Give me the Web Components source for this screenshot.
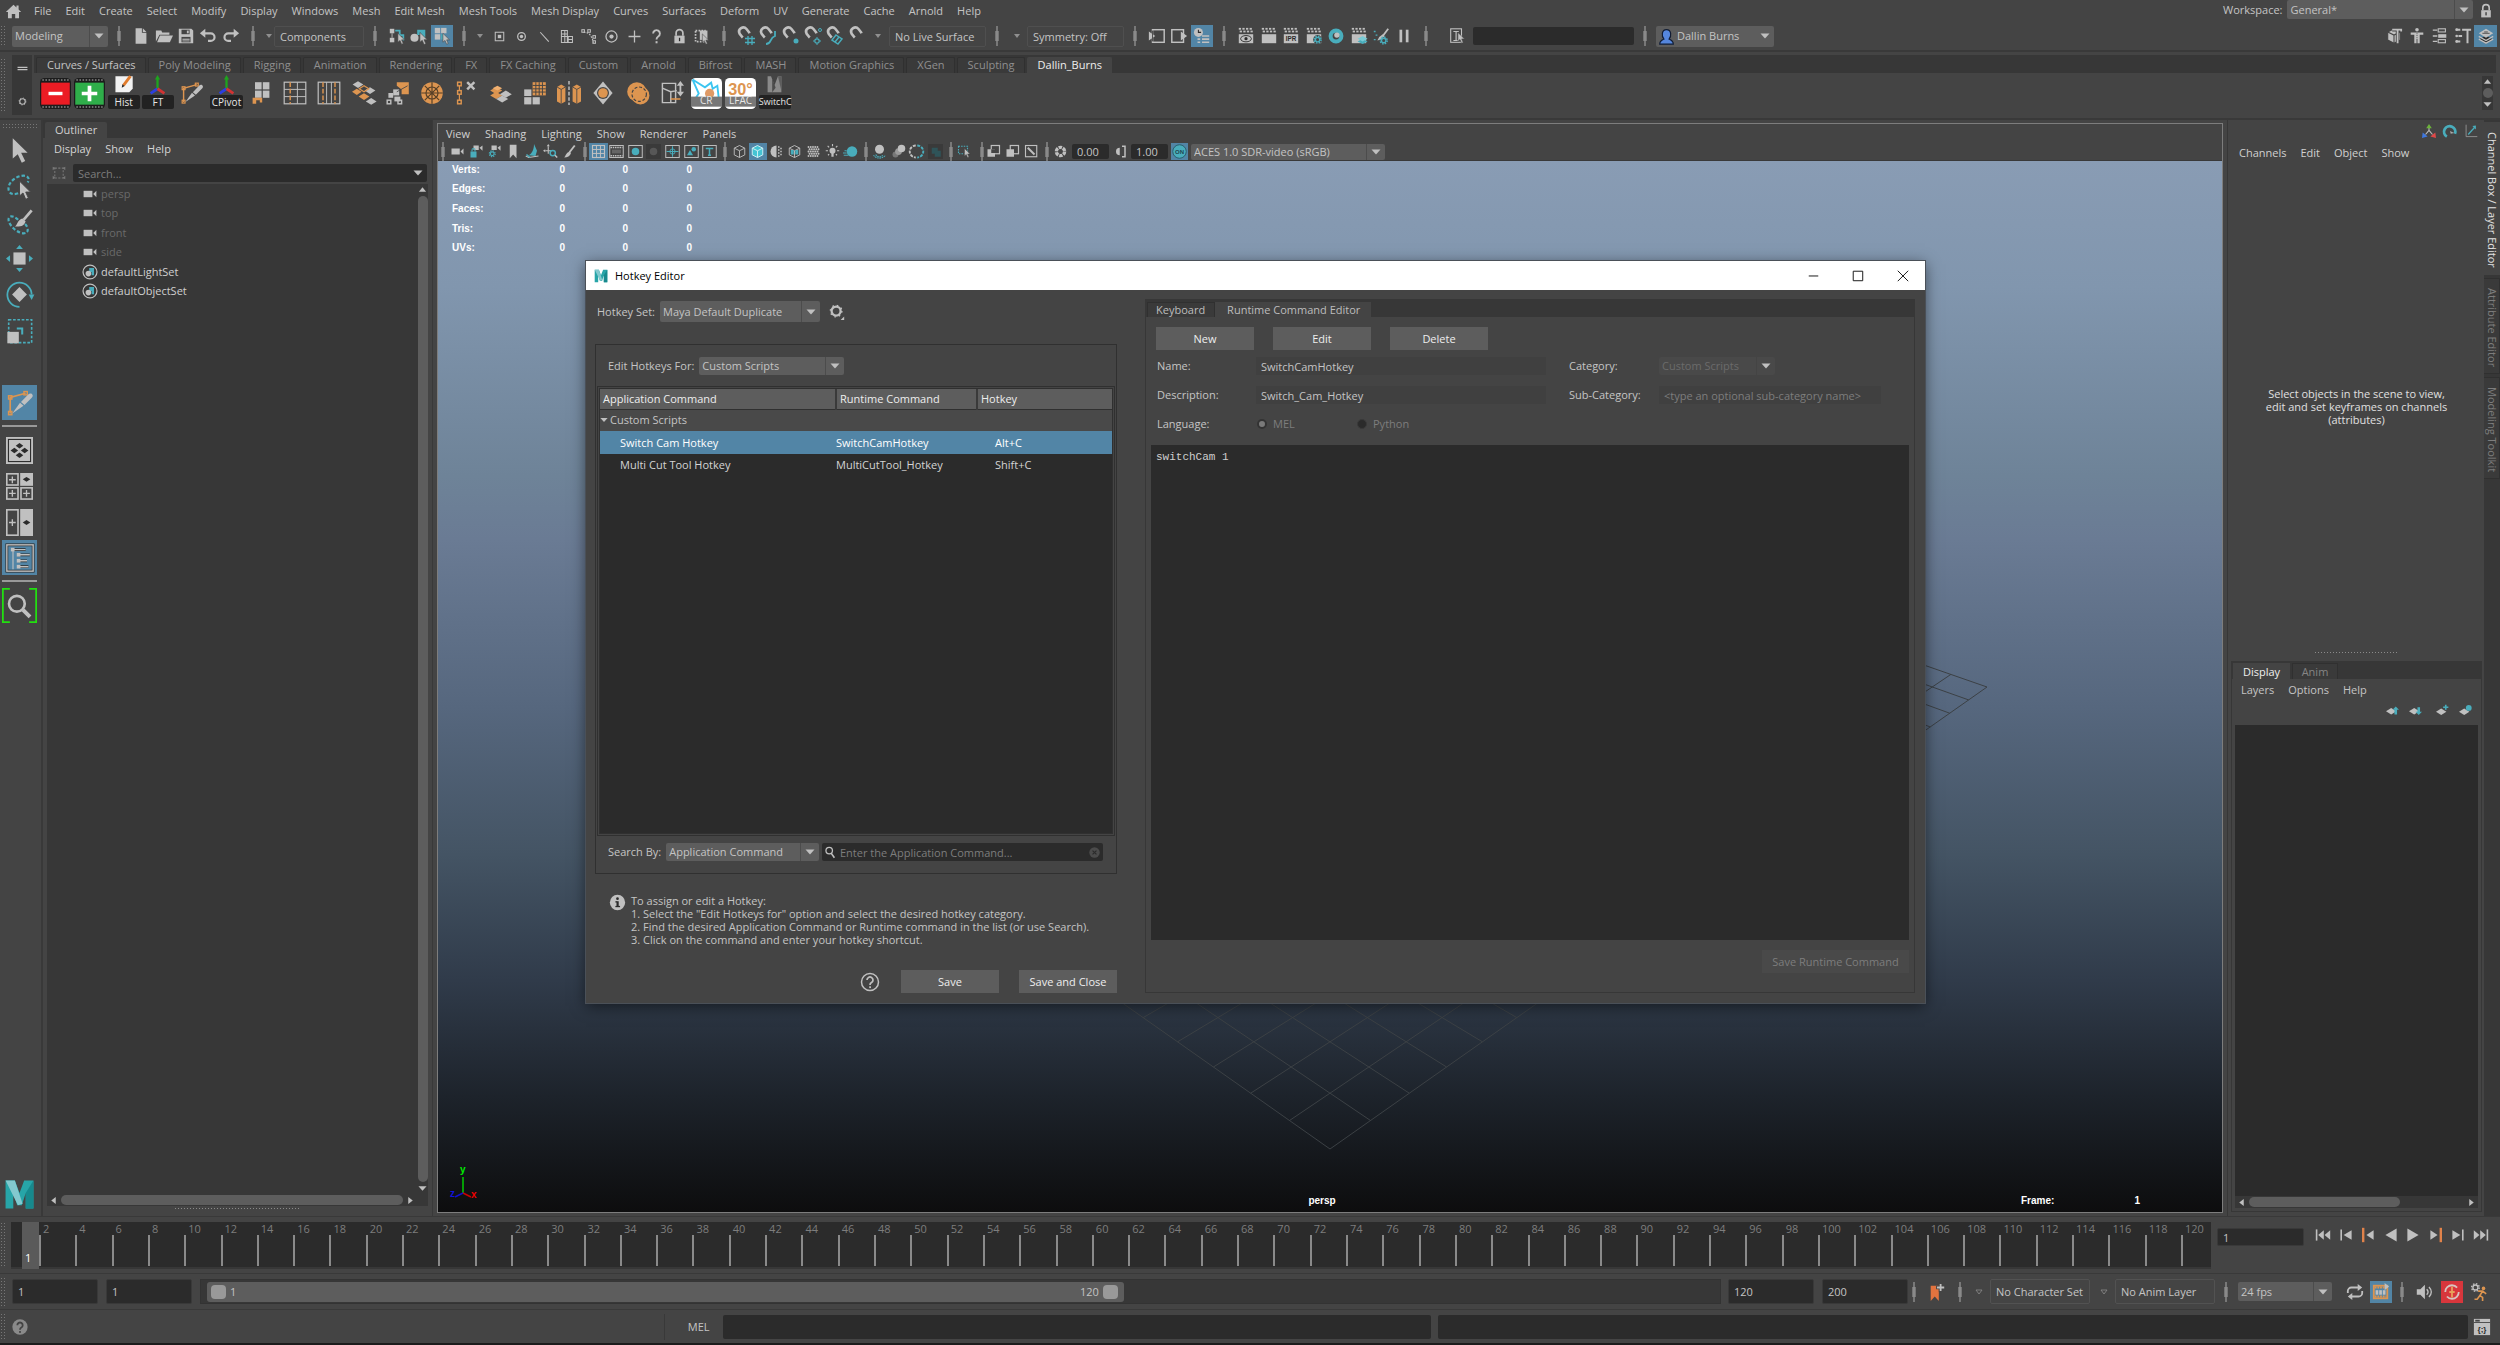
<!DOCTYPE html>
<html lang="en">
<head>
<meta charset="utf-8">
<title>Maya - Hotkey Editor</title>
<style>
  html, body { margin: 0; height: 100%; background: #444; overflow: hidden; }
  body { font: 11px/14px "Open Sans", "Noto Sans", sans-serif; color: #c4c4c4; }
</style>
</head>
<body>
<maya-app></maya-app>
<script>
const G = '#c0c0c0', T = '#49adbc', O = '#dd9550', D = '#2b2b2b', B = '#444';

/* ---------- drawing helpers for the icon set (20 x 20 grid) ---------- */
const P = (d, f = G) => `<path d="${d}" fill="${f}"/>`;
const S = (d, c = G, w = 1.5, x = '') => `<path d="${d}" fill="none" stroke="${c}" stroke-width="${w}" ${x}/>`;
const R = (x, y, w, h, f = G) => `<rect x="${x}" y="${y}" width="${w}" height="${h}" fill="${f}"/>`;
const RS = (x, y, w, h, c = G, s = 1.2) => `<rect x="${x}" y="${y}" width="${w}" height="${h}" fill="none" stroke="${c}" stroke-width="${s}"/>`;
const C = (x, y, r, f = G) => `<circle cx="${x}" cy="${y}" r="${r}" fill="${f}"/>`;
const CS = (x, y, r, c = G, w = 1.5, e = '') => `<circle cx="${x}" cy="${y}" r="${r}" fill="none" stroke="${c}" stroke-width="${w}" ${e}/>`;
const TX = (x, y, s, t, f = D) => `<text x="${x}" y="${y}" font-size="${s}" font-weight="700" text-anchor="middle" fill="${f}" font-family="Liberation Sans, sans-serif">${t}</text>`;
const cursor = (x, y, s = 1) => `<path transform="translate(${x} ${y}) scale(${s})" d="M0 0v11l2.600-2.200 2 4.700 2-.9-2-4.500h3.600z" fill="${G}" stroke="${B}" stroke-width=".7"/>`;
const magnet = S('M7 12L3.500 7.500A4.200 4.200 0 0 1 10.500 3L14 7.500', G, 2.6) + S('M5.600 12.900l2.800-2M12.600 8.500l2.800-2', B, 1);
const clap = [2, 6, 10, 14].map(x => R(x, 1, 2.5, 2) + R(x + 1, 4, 2.5, 2)).join('') + R(2, 8, 16, 10);
const cog = (x, y, r, c, w = 1.6) => CS(x, y, r, c, w) + CS(x, y, r + 1.400, c, 1.6, `stroke-dasharray="1.700 ${((2 * Math.PI * (r + 1.4)) / 8 - 1.7).toFixed(2)}"`);
const dia = (x, y, w, h, f) => P(`M${x - w} ${y}L${x} ${y - h}L${x + w} ${y}L${x} ${y + h}z`, f);
const cube = (f, s) => `<path d="M10 2l7 3.500v9L10 18l-7-3.500v-9z" fill="${f}" stroke="${s}" stroke-width="1.200"/>` + S('M3 5.500L10 9l7-3.500M10 9v9', s, 1.2);
const knife = S('M3 17.500V6L14 3', O, 1.2) + RS(1.8, 4.800, 2.400, 2.400, O, 1) + RS(12.800, 1.800, 2.400, 2.400, O, 1) + RS(1.800, 16, 2.400, 2.400, O, 1) +
  P('M18.500 3.500c1 .8.700 2-.3 3l-5 5-2.500-2.200 5-5.200c1-1 2-1.200 2.800-.6z') + P('M10 9.800l2.500 2.200L4.500 17.500z');
const axes = S('M10 12V3', '#1ea51e', 2) + S('M10 12l-6 4', '#2b3fe0', 2.500) + S('M10 12l6 4', '#d23333', 2.500) + P('M10 0l2.200 4H7.800z', '#1ea51e');
const camera = R(2, 6, 11, 8) + P('M14 10l4-4v8z');
const maya = P('M1 1h6l3 8 3-8h6v18h-5V9l-2.500 8h-3L6 9v10H1z', '#27a5a8') + P('M1 1h6l5 15-3 1z', '#83c9cf') + P('M14 9v10h5V1z', '#17898d');

const ICONS = {
  home: P('M10 2L1 10.500h2.500V18H8v-5h4v5h4.500v-7.500H19L16 7.700V3h-2.500v2.300z'),
  new: P('M4 1.500h7v5h5V18.500H4z') + P('M12 1.500l4 4h-4z'),
  open: P('M1 4h6l1 2h8v2.500H5L1 16z') + P('M5.500 9.500H20L16.500 17H2.300z'),
  save: P('M2 2h14l2 2v14H2z') + R(5, 3, 9, 5, B) + R(11, 4, 2, 3) + R(5, 11, 10, 6, B) + R(6, 13, 8, 1.200) + R(6, 15, 8, 1),
  undo: S('M4 7h9a4 4 0 0 1 0 8.500h-3', G, 2.400) + P('M7 2v10L1 7z'),
  redo: S('M16 7H7a4 4 0 0 0 0 8.500h3', G, 2.400) + P('M13 2v10l6-5z'),
  selHier: R(2, 2, 5, 5) + R(2, 12, 5, 5) + S('M4.500 7v5', G, 1) + S('M8 4h5v5h4v6', T, 2) + cursor(11, 7, .9),
  selObj: C(5, 12, 4.500) + P('M8 3h9v9h-5V9H8z', T) + cursor(11, 6, 1),
  selComp: R(2, 1, 6, 6) + R(9, 1, 6, 6) + R(2, 8, 6, 6) + R(9, 8, 4, 6, T) + cursor(11, 7, .9),
  square: RS(5, 5, 10, 10) + R(8, 8, 4, 4),
  point: CS(10, 10, 4.500) + C(10, 10, 2),
  line: S('M5 5l10 11', G, 1.3),
  quad: S('M4 3h7v14H4zM4 10h13v7H4M8 3v14M4 7h7M12 10v7M11 13.500h6', G, 1.2),
  nurbs: S('M3 5c8 0 9 5 12 12', G, 1.300, 'stroke-dasharray="2 1.500"') + RS(1, 2, 3, 3) + RS(8, 2, 3, 3) + RS(14, 9, 3, 3) + RS(14, 15, 3, 3),
  target: CS(10, 10, 6.500) + C(10, 10, 2.500),
  plus: S('M10 3v14M3 10h14', G, 1.500),
  query: S('M6 6.500a4 4 0 1 1 6 3.500c-1.500 1-2 1.500-2 3.500', G, 2.2) + R(8.900, 15.500, 2.300, 2.500),
  lock: S('M6 9V6a4 4 0 0 1 8 0v3', G, 2) + R(4, 9, 12, 9) + R(9.300, 11.500, 1.500, 4, D),
  selBox: S('M3 3h11v13H3z', G, 2, 'stroke-dasharray="2 1.500"') + P('M8 3h9v11H8z') + cursor(11, 7, .9),
  magGrid: magnet + S('M12 10v9M16 10v9M9 12.500h10M9 16.500h10', T, 1.300),
  magCurve: magnet + S('M8 18c6 0 3-6 9-8V5', T, 1.800),
  magPoint: magnet + C(15, 15, 2.500, T),
  magProj: magnet + CS(14, 15, 2.200, T, 1.200) + CS(17, 4, 1.500, T, 1) + S('M14 11v1.500M14 17.500V19M10 15h1.500M16.500 15H18', T, 1),
  magPlane: magnet + S('M11 9l6 4-4 5-6-4zM14 11l-4 5', T, 1.500),
  mag: magnet,
  inNode: RS(5, 3, 13, 14, G, 1.600) + P('M1 5l7 5-7 5z') + S('M5 4v12', B, 1),
  outNode: RS(2, 3, 13, 14, G, 1.600) + P('M12 5l7 5-7 5z'),
  history: C(6, 6, 5) + S('M6 3v3h3', D, 1.200) + S('M10 10h8M10 13.500h8M10 17h8M5 13.500h3M5 17h3', G, 1.800),
  clapEye: clap + `<ellipse cx="10" cy="13" rx="6" ry="3.500" fill="none" stroke="${D}"/>` + C(10, 13, 1.800, D),
  clap: clap,
  clapIPR: clap + TX(10, 16, 7, 'IPR'),
  clapCog: clap + C(14, 14, 5, B) + cog(14, 14, 2.500, T),
  ring: CS(10, 10, 6, T, 4.500) + C(11, 9, 3, G),
  clapLayers: clap + dia(14, 16, 5.500, 3, T) + dia(14, 13, 5.500, 3, '#7accd6'),
  paintCog: S('M18 2l-6 8', G, 2) + P('M12 8l2 2-4 4-4 1 2-4z') + cog(13, 15, 2.500, T) + S('M2 5h2M4 9h2M2 14h2', T, 1.500),
  pause: R(5, 3, 3, 14) + R(12, 3, 3, 14),
  inputLine: RS(3, 2, 12, 15) + S('M6 5h6M9 5v10M6 15h6', G, 1.300) + cursor(11, 6, .9),
  user: `<path d="M2 19c0-4 3-5 5-6-3-3-3-11 3-11s6 8 3 11c2 1 5 2 5 6z" fill="#5586dd" stroke="#111c33" stroke-width="1.400"/>`,
  hammerCube: cube(G, B) + S('M8 3h10M14 4v14', B, 4) + S('M8 3h10v2M14 4v14', G, 2),
  human: C(10, 3, 2) + P('M3 6h14v2.500h-4V18h-2.500v-5h-1v5H7V8.500H3z') + S('M10 7v5', B, 1, 'stroke-dasharray="1 1"'),
  attrs: RS(8, 2, 8, 3.500) + RS(8, 14, 8, 3.500) + R(8, 8, 9, 4) + S('M2 3.500h5M2 10h5M2 16h5', G, 1.500),
  toolSet: S('M2 3h5M5 10h4M2 16h5M9 3h10M15 3v15', G, 2.200) + C(3, 10, 1.500) + C(3, 3, 1.500) + C(3, 16, 1.500),
  layers: dia(10, 14, 8, 4.500, D) + S('M2 13.500l8 4.500 8-4.500M2 10.500l8 4.500 8-4.500', G, 1.500) + dia(10, 7, 8, 5, G) + S('M6 7h8M8 5.500h4', D, .8),
  /* shelf */
  minus: `<rect x="0" y="0" width="20" height="20" rx="3" fill="#1c1c1c"/>` + S('M1.500 1.300h17M1.500 18.700h17', '#888', 1, 'stroke-dasharray="1 1"') + R(.8, 3, 18.400, 14.200, '#ec1c24') + S('M5.500 10h9', '#fff', 2.200),
  plusG: `<rect x="0" y="0" width="20" height="20" rx="3" fill="#1c1c1c"/>` + S('M1.500 1.300h17M1.500 18.700h17', '#888', 1, 'stroke-dasharray="1 1"') + R(.8, 3, 18.400, 14.200, '#2fae4a') + S('M5 10h10M10 5v10', '#fff', 2.400),
  hist: P('M3 1h15v11l-3 3H3z', '#f2f2f2') + S('M16 1l-6 8', '#e07b2c', 2.500) + P('M8.500 11l.5-3 2 1.500z', '#222'),
  axes: axes,
  knife: knife,
  extrude: R(5, 1, 5.500, 6) + R(11.500, 1, 5.500, 6) + R(5, 8, 5.500, 6) + R(11.500, 8, 5.500, 6) + P('M3 14h8v4H9v-2H6v3H3z', O),
  edgeLoop: RS(1, 1, 18, 18, G, 1) + S('M12 1v18M1 7h18M1 13h18', G, .8) + S('M6 1v18', O, 1.200, 'stroke-dasharray="4 1.500"'),
  edgeLoops: RS(1, 1, 18, 18, G, 1) + S('M8 1v18M12 1v18', G, .8) + S('M5 1v18M15 1v18', O, 1.200, 'stroke-dasharray="4 1.500"'),
  diamonds: dia(5, 3, 4.500, 2.800, G) + dia(15, 8, 4.500, 2.800, G) + S('M6 6.500l4-2.500 4 2.500-4 2.500z', O, 1) + dia(4, 9, 4, 2.600, O) + dia(10, 13, 4.500, 2.800, O) + dia(16, 17, 4.500, 2.800, G),
  bridge: P('M9 1h10v10h-6V7L9 4z', O) + R(6, 7, 5, 5) + R(2, 10, 4, 4) + R(7, 13, 5, 4) + RS(1, 16, 3, 3) + RS(10, 16, 3, 3) + S('M18 4L9 9', B, .7),
  wheel: C(10, 10, 9, O) + S('M10 1v18M1 10h18M4 4l12 12M16 4L4 16', '#574027', 1) + CS(10, 10, 5, '#574027', 1),
  chain: RS(3, 1, 3, 3, O) + RS(3, 8, 3, 3, O) + RS(3, 16, 3, 3, O) + S('M4.500 4v4M4.500 11v5', O, 1) + S('M11 1l6 6M17 1l-6 6', G, 2),
  stack: dia(6, 12, 5, 3, O) + dia(6, 8, 5, 3, O) + dia(11, 15, 5, 3, G) + dia(14, 11, 5, 3, G) + dia(7, 6, 4, 2, '#f0b070'),
  subdiv: R(8, 1, 11, 11, O) + S('M10.700 1v11M13.500 1v11M16.200 1v11M8 3.700h11M8 6.500h11M8 9.200h11', B, .8) + R(1, 7, 6, 5.500) + R(1, 13.500, 6, 6) + R(8, 13.500, 6, 6),
  mirror: P('M0 5l3.500-2L7 5v12l-3.500 2L0 17z', O) + P('M13 5l3.500-2L20 5v12l-3.500 2-3.500-2z', O) + S('M0 5l3.500 2v12M7 5L3.500 7M13 5l3.500 2v12M20 5l-3.500 2', B, .7) + S('M10 0v20', G, 1.200, 'stroke-dasharray="3 1.500"'),
  circlePt: P('M10 .5l8 9.500-8 9.500L2 10z') + C(10, 10, 5, B) + C(10, 10, 4, O),
  sphere: C(9, 9, 8, O) + C(12, 12, 7.500, O) + CS(11, 11, 6, B, 1, 'stroke-dasharray="2.500 1.500"'),
  lattice: S('M2 2h11v16H2zM2 6l7 3v9M9 9l5-1', G, 1.200) + S('M9 15h8', O, 1.300) + S('M17 3v7', G, 1.500) + P('M17 0l3 4h-6zM17 13l3-4h-6z'),
  burst: `<rect x="0" y="0" width="20" height="20" rx="3" fill="#fff"/>` + S('M1 1l8 5 4-3 1 4 3-2 1 9M1 1l4 9-2 3 5 1', '#3cc5f0', 1.200) + C(12, 10, 3, '#df9a66') + P('M0 12h20v6.500H0z', '#777'),
  thirty: `<rect x="0" y="0" width="20" height="20" rx="3" fill="#fff"/>` + TX(10, 11, 10.500, '30°', O) + P('M0 12h20v6.500H0z', '#777'),
  switchM: P('M4 1h3l3 8 3-8h3v14H4z', '#8a8a8a') + P('M8 3l3 8-3 4z', '#4c4c4c') + P('M13 1h3v13z', '#5d5d5d'),
  /* viewport bar */
  cam: camera,
  camLock: R(6, 2, 7, 6) + P('M14 5l4-3v7z') + R(2, 10, 8, 8, T) + S('M4 10V8a2 2 0 0 1 4 0v2', T, 1.500),
  camCog: R(6, 2, 7, 6) + P('M14 5l4-3v7z') + cog(7, 13, 2.500, T),
  bookmark: P('M5 1h9v18l-4.500-5L5 19z'),
  plane: P('M5 15C9 13 12 8 12 0l4 9-2 7z', T) + S('M1 16l4 2 13-2', G, 1.500) + S('M2 14l5 4', T, 2),
  panZoom: S('M3 9h8M7 3v10', G, 1.500) + P('M7 0l2 3H5zM0 9l3-2v4z') + CS(13, 12, 3.500, T, 2) + S('M16 15l3 3', G, 2),
  brush: S('M17 2l-7 9', G, 2.500) + P('M10 10l2 2c-1 4-5 6-9 6 2-2 2-6 7-8z'),
  gridBox: RS(2, 2, 16, 16, G, 1.500) + S('M7.300 2v16M12.600 2v16M2 7.300h16M2 12.600h16', G, 1.300),
  film: RS(1, 2, 18, 16, G, 1.300) + S('M2 4.500h16M2 15.500h16', G, 2, 'stroke-dasharray="2 1"') + R(4, 7.500, 12, 5, '#666'),
  gate: RS(1, 2, 18, 16, G, 1.300) + C(10, 10, 5, T),
  gateDim: R(0, 0, 20, 20, '#3a3a3a') + C(10, 10, 5, '#575757'),
  chart: RS(1, 2, 18, 16, G, 1.300) + S('M10 3v14M2 10h16', T, 1.400) + CS(10, 10, 3.500, T, 1.200),
  safe: RS(1, 2, 18, 16, G, 1.300) + C(13, 7, 3, T) + P('M4 15l4-7 4 7z', T),
  safeT: RS(1, 2, 18, 16, G, 1.300) + S('M5 6h10M10 6v9M8 15h4', T, 2),
  wire: cube('none', G),
  shaded: cube('#45c4d4', '#d8f4f8'),
  halfTex: P('M10 2a8 8 0 0 0 0 16z') + S('M13 3v14M16 5v10', G, 2, 'stroke-dasharray="2 2"'),
  texCube: cube('none', G) + R(5, 8, 4, 6, T) + R(11, 8, 4, 6, T),
  checker: C(10, 10, 8, '#555') + [3, 6, 9, 12, 15].map((y, i) => [3, 6, 9, 12, 15].filter(x => Math.hypot(x - 9, y - 9) < 8.5).map(x => C(x + (i % 2 ? 1.5 : 0) + .3, y + 1, 1.2)).join('')).join(''),
  bulb: C(10, 9, 4) + R(8.500, 12, 3, 5) + S('M10 0v3M1 9h3M16 9h3M3.500 2.500l2 2M16.500 2.500l-2 2M4 15l1.500-1.500M16 15l-1.500-1.500', G, 1.500),
  shadow: C(12, 10, 7, T) + S('M0 12h5M1 15h6M2 9h3', T, 1.300),
  occl: C(10, 7, 6) + S('M5 14c2 4 8 4 10 0M2 15c4 5 12 5 16 0', T, 1.500, 'stroke-dasharray="2 1"'),
  blur: C(6, 14, 4, '#777') + C(10, 10, 4.500, '#9a9a9a') + C(14, 6, 5),
  aa: S('M9 2a8 8 0 0 0 0 16', G, 2.500, 'stroke-dasharray="4 1.500"') + S('M11 2a8 8 0 0 1 0 16', T, 2.500, 'stroke-dasharray="4 1.500"'),
  dof: R(0, 0, 20, 20, '#3a3a3a') + R(5, 5, 8, 8, '#2f5459') + R(9, 9, 8, 8, '#2f5459'),
  isoSel: S('M2 3h12v10H2z', T, 1.500, 'stroke-dasharray="2 1.500"') + cursor(10, 6, .9),
  xray: RS(7, 2, 11, 11, G, 1.600) + R(2, 7, 10, 10) + R(7, 7, 5, 5, B),
  xrayJ: RS(7, 2, 11, 11, G, 1.600) + R(2, 7, 10, 10),
  xrayA: RS(2, 2, 15, 15, G, 1.500) + S('M5 5l9 9', G, 2.500),
  aperture: CS(10, 10, 5.500, G, 4.500, 'stroke-dasharray="4.500 1.200"'),
  gamma: S('M12 3h4v14h-4', G, 2) + P('M9 5v10a5 5 0 0 1 0-10z'),
  on: C(10, 10, 9, T) + CS(10, 10, 9, '#245a66', 1.200) + TX(10, 13, 8, 'ON', '#1e4750'),
  /* tool box */
  arrow: P('M5 1v15l3.700-3.200 3 6.200 2.500-1.200-3-6.200H16z'),
  lasso: S('M9 15c-5 2-8-1-7-5s6-8 11-8c3 0 5 2 3 5', T, 1.600, 'stroke-dasharray="2.500 1.500"') + cursor(10, 6, 1),
  paintSel: S('M9 8C5 4 1 5 2 9s7 9 11 9 4-4 1-7', T, 1.600, 'stroke-dasharray="2.500 1.500"') + S('M19 1l-6 7', G, 2) + P('M12 7l2.500 2c-1 4-4 4-8 4 2-1 2-5 5.500-6z'),
  move: R(5.500, 5.500, 9, 9) + P('M10 0l2.500 3h-5zM10 20l2.500-3h-5zM0 10l3-2.500v5zM20 10l-3-2.500v5z', T),
  rotate: S('M10 19.200A9 9 0 1 1 19 10', T, 1.300) + P('M19 14l-2.200-4h4.200z', T) + P('M10 4.500l5.500 5.500-5.500 5.500L4.500 10z'),
  scale: S('M2 2h17v17H2z', T, 1.200, 'stroke-dasharray="2 1.200"') + R(1, 11, 8.500, 8.500) + S('M8 8.500h4V13', T, 1.500),
  single: R(0, 0, 20, 20) + RS(1.800, 1.800, 16.400, 16.400, D, .8) + dia(10, 6.500, 2.800, 2, D) + dia(6.200, 10, 2.800, 2, D) + dia(13.800, 10, 2.800, 2, D) + dia(10, 13.500, 2.800, 2, D),
  four: RS(.6, .6, 8.300, 8.300) + R(10.500, 0, 9.500, 9.500) + RS(.6, 11, 8.300, 8.300) + RS(11.100, 11, 8.300, 8.300) + S('M4.700 2.500v5M2.200 5h5M4.700 12.600v5M2.200 15.100h5M15.200 12.600v5M12.700 15.100h5', G, 1) + dia(15.200, 4.700, 2.800, 1.800, D),
  two: RS(.6, .6, 8.300, 18.800) + R(10.500, 0, 9.500, 20) + S('M4.700 7.500v5M2.200 10h5', G, 1) + dia(15.200, 10, 2.800, 1.800, D),
  outl: RS(.6, .6, 18.800, 18.800, D, 2) + RS(.6, .6, 18.800, 18.800, G, 1) + S('M5 5v13', G, .8) + S('M5 4h9M8 7.700h9M8 12h7M8 16.200h8', D, 2) + S('M5 4h9M8 7.700h9M8 12h7M8 16.200h8', G, 1) + [[3.5, 2.7], [7.700, 6.400], [7.700, 10.700], [7.700, 14.900]].map(([x, y]) => R(x, y, 2.600, 2.600)).join(''),
  searchG: S('M4.500 .5h-4v19h4M15.500 .5h4v19h-4', '#22e010', 1) + CS(8.500, 9, 4.500, G, 1.500) + S('M12 12.500l4 4', G, 2.200),
  maya: maya,
  setIcon: CS(10, 10, 8.700, G, 1.500) + P('M9 5h6v9h-3v-4H9z', T) + C(8, 12, 3.500),
  filter: S('M4 3h12v14H4z', '#777', 1.500, 'stroke-dasharray="3 2"') + P('M1 1l4 2-4 3zM19 1l-4 2 4 3zM1 19l4-2-4-3zM19 19l-4-2 4-3z', '#777'),
  /* side panel */
  manip: S('M10 9L5 15M10 9l5 6M10 10V5', G, 1.500) + P('M10 0l4 6H6z', '#6cb33c') + P('M0 20l1-8 7 6z', '#3f78e0') + P('M20 20l-1-8-7 6z', '#e04848'),
  gauge: S('M5.500 18A8 8 0 1 1 17 14', T, 4) + C(10, 11, 3, B) + P('M10 10l6 3-5 1z', '#aaa'),
  graph: S('M3 1v17h16', '#999', 1.200) + S('M6 15L15 5', T, 1.800) + P('M17 2v6l-5-5z', T),
  layUp: dia(8, 11, 8, 5, G) + P('M15 4l5 5h-3v7h-4V9h-3z', T),
  layDown: dia(8, 11, 8, 5, G) + P('M15 17l5-5h-3V5h-4v7h-3z', T),
  layNew: dia(8, 12, 8, 5, G) + S('M15 1v8M11 5h8', T, 2.500),
  layObj: dia(8, 12, 8, 5, G) + C(15, 6, 4.500, T),
  /* playback */
  toStart: S('M2 3v14', G, 2) + P('M11 4v12l-7-6zM19 4v12l-7-6z'),
  stepBack: S('M4 3v14', G, 2) + P('M17 4v12l-10-6z'),
  keyBack: S('M4 1v18', '#e0824a', 3) + P('M17 4v12l-9-6z'),
  playBack: P('M17 2v16L3 10z'),
  play: P('M3 2v16l14-8z'),
  keyFwd: S('M16 1v18', '#e0824a', 3) + P('M3 4v12l9-6z'),
  stepFwd: S('M16 3v14', G, 2) + P('M3 4v12l10-6z'),
  toEnd: S('M18 3v14', G, 2) + P('M9 4v12l7-6zM1 4v12l7-6z'),
  bookAdd: P('M3 3h9v17l-4.500-5L3 20z', '#e2733f') + S('M14 0v10M9 5h10', B, 4) + S('M14 1v8M10 5h8', G, 2),
  loop: S('M15 5H6a4 4 0 0 0-4 4v2M5 15h9a4 4 0 0 0 4-4V9', G, 2) + P('M13 1l5 4-5 4zM7 11v8l-5-4z'),
  filmAct: RS(2, 3, 15, 14, O, 2) + S('M3 5h13M3 15h13', O, 2, 'stroke-dasharray="2 1"') + R(4, 8, 3, 5) + R(8, 8, 3, 5) + R(12, 8, 3, 5) + P('M14 0l5 4-5 4z'),
  speaker: P('M2 7h4l5-5v16l-5-5H2z') + S('M13 7c2 2 2 4 0 6M15.500 4.500c3.500 3.500 3.500 7.500 0 11', G, 1.500),
  autokey: CS(10, 10, 7.500, '#d8c4c0', 2, 'stroke-dasharray="18 5.500"') + S('M10 4v12M7 10h6', '#e8a05a', 2),
  runner: cog(6, 5, 2.800, G, 1.500) + C(15, 6, 2, O) + S('M14 9l-3 5 3 2v4M11 14l-3 4H5M9 9l5 0 4 3', O, 1.800),
  script: R(1, 1, 18, 18) + R(2.500, 2, 5, 2, B) + S('M1 5h18', B, 1) + TX(10, 15, 9, '{;}'),
  help: C(10, 10, 8.500, '#8a8a8a') + S('M7 8a3 3 0 1 1 4.500 2.600C10.300 11.300 10 12 10 13', B, 2) + R(9, 14.500, 2, 2, B),
  helpO: CS(10, 10, 8.500, G, 1.500) + S('M7 8a3 3 0 1 1 4.500 2.600C10.300 11.300 10 12 10 13', G, 1.700) + R(9.200, 14.300, 1.800, 1.800),
  info: C(10, 10, 9, G) + R(8.800, 8.500, 2.600, 6.500, D) + R(7.500, 8.500, 2, 1.500, D) + R(7.500, 14, 5.500, 1.500, D) + C(10, 5.500, 1.600, D),
  gear: cog(9, 9, 5, G, 2.500) + P('M18 15v4h-4z'),
  gearS: cog(10, 10, 5, G, 2),
  bars: S('M1 8h18M1 12h18', G, 2),
  find: CS(8, 7, 5, G, 2) + S('M11 11l5 7', G, 2.500),
  clear: C(10, 10, 8, '#4b4b4b') + S('M7 7l6 6M13 7l-6 6', '#2b2b2b', 1.800),
  tri: P('M4 6h12l-6 8z', '#8f8f8f'),
  triO: S('M4 6h12l-6 8z', '#8f8f8f', 1.500),
  triBig: P('M1 5h18l-9 10z'),
  triUp: P('M2 15h16L10 5z'),
  triL: P('M15 2v16L5 10z'),
  triR: P('M5 2v16l10-8z'),
  sep: S('M10 0v20', '#8a8a8a', 1.500) + R(8.300, 5, 3.400, 10, '#8a8a8a'),
  wMin: S('M5 10.500h10', '#111', 1),
  wMax: S('M5.500 5.500h10v10h-10z', '#111', 1),
  wClose: S('M5 5l11 11M16 5L5 16', '#111', 1),
};

const RESET = `
  *, *::before { box-sizing: border-box; }
  :host { display: block; box-sizing: border-box; }
  button, input, select, textarea { font: inherit; color: inherit; background: none; border: 0; padding: 0; margin: 0; outline: 0; border-radius: 0; min-width: 0; }
  ::placeholder { color: #7d7d7d; opacity: 1; }
`;

function component(name, css, html) {
  customElements.define(name, class extends HTMLElement {
    connectedCallback() {
      if (this.shadowRoot) return;
      const root = this.attachShadow({ mode: 'open' });
      const tpl = document.createElement('template');
      tpl.innerHTML = `<style>${RESET}${css}</style>${typeof html === 'function' ? html(this) : html}`;
      root.append(tpl.content.cloneNode(true));
    }
  });
}
const attr = (el, n, d = '') => el.getAttribute(n) ?? d;

/* ---------- small parts ---------- */
component('m-icon', `
  :host { display: block; flex: none; width: var(--s, 20px); height: var(--s, 20px); }
  svg { display: block; width: 100%; height: 100%; overflow: visible; }`,
  el => `<svg viewBox="0 0 20 20" aria-hidden="true">${ICONS[attr(el, 'name')] || ''}</svg>`);

component('m-sep', `:host { flex: none; width: 10px; } m-icon { --s: 20px; margin: 0 -5px; }`, `<m-icon name="sep"></m-icon>`);

/* evenly spread row of icon buttons; a leading * marks the active one */
component('m-tools', `
  :host { flex: none; display: grid; grid-auto-flow: column; grid-auto-columns: 1fr; align-items: center; }
  button { display: grid; place-items: center; height: var(--h, 22px); width: 100%; }
  .on { background: #5285a6; }
  .red { background: #d8363c; }`,
  el => attr(el, 'icons').split(' ').map(n => {
    const key = n.replace(/^[*!]/, '');
    return `<button type="button" aria-label="${key}" class="${n[0] === '*' ? 'on' : n[0] === '!' ? 'red' : ''}"><m-icon name="${key}"></m-icon></button>`;
  }).join(''));

component('m-menu', `
  :host { display: flex; flex: none; gap: var(--gap, 14px); align-items: center; }
  button { white-space: nowrap; }`,
  el => attr(el, 'items').split('|').map(t => `<button type="button">${t}</button>`).join(''));

component('m-combo', `
  :host { display: flex; flex: none; align-items: center; }
  label { flex: none; padding-right: 5px; white-space: nowrap; }
  .box { position: relative; flex: 1; display: flex; height: var(--h, 21px); background: var(--bg, #5d5d5d); border-radius: 2px; }
  select { appearance: none; width: 100%; height: 100%; padding: 0 20px 0 3px; }
  select:disabled { color: #6b6b6b; opacity: 1; }
  .arrow { position: absolute; right: 0; top: 0; bottom: 0; width: 19px; display: grid; place-items: center; border-left: 1px solid var(--line, #4c4c4c); pointer-events: none; --s: 10px; }
  :host([icon]) select { padding-left: 21px; }
  .lead { position: absolute; left: 2px; top: 2px; --s: 17px; }`,
  el => `${attr(el, 'label') ? `<label for="s">${attr(el, 'label')}</label>` : ''}<div class="box">${attr(el, 'icon') ? `<m-icon class="lead" name="${attr(el, 'icon')}"></m-icon>` : ''}<select id="s" aria-label="${attr(el, 'label') || attr(el, 'name')}" ${el.hasAttribute('disabled') ? 'disabled' : ''}><option>${attr(el, 'value')}</option></select><span class="arrow"><m-icon name="triBig"></m-icon></span></div>`);

component('m-field', `
  :host { display: block; flex: none; height: 18px; }
  input { display: block; width: 100%; height: 100%; padding: 0 5px; background: var(--bg, #2b2b2b); border: var(--bd, 0); border-radius: 2px; }`,
  el => `<input type="text" aria-label="${attr(el, 'name')}" value="${attr(el, 'value')}" placeholder="${attr(el, 'placeholder')}">`);

component('m-hscroll', `
  :host { display: flex; align-items: center; height: 12px; background: #373737; --s: 9px; padding: 0 2px; gap: 3px; }
  .track { flex: 1; }
  .thumb { height: 10px; border-radius: 5px; background: #5d5d5d; width: var(--thumb, 100%); }`,
  `<m-icon name="triL"></m-icon><div class="track"><div class="thumb"></div></div><m-icon name="triR"></m-icon>`);

component('m-vscroll', `
  :host { display: flex; flex-direction: column; align-items: center; width: 11px; background: #373737; --s: 9px; padding: 1px 0; gap: 2px; }
  .thumb { flex: 1; width: 10px; border-radius: 5px; background: #5d5d5d; }`,
  `<m-icon name="triUp"></m-icon><div class="thumb"></div><m-icon name="triBig"></m-icon>`);

component('m-grip', `
  :host { flex: none; width: 6px; align-self: stretch; margin: 3px 0; background: radial-gradient(circle, #777 0 .8px, transparent 1px) 0 0 / 3px 3px; }`, '');

component('m-dots', `:host { height: 1px; width: 126px; margin: 0 auto; background: repeating-linear-gradient(90deg, #8a8a8a 0 1px, transparent 1px 3px); }`, '');

/* ---------- top bars ---------- */
component('menu-line', `
  :host { display: flex; flex: none; align-items: center; height: 22px; padding: 0 5px; background: #444; }
  m-menu { margin-left: 12px; }
  .home { --s: 17px; }
  m-combo { margin-left: auto; width: 250px; --h: 19px; align-self: flex-start; }
  .lock { --s: 16px; margin: 0 1px 0 5px; }`,
  `<m-icon class="home" name="home"></m-icon>
   <m-menu items="File|Edit|Create|Select|Modify|Display|Windows|Mesh|Edit Mesh|Mesh Tools|Mesh Display|Curves|Surfaces|Deform|UV|Generate|Cache|Arnold|Help"></m-menu>
   <m-combo label="Workspace:" value="General*"></m-combo><m-icon class="lock" name="lock"></m-icon>`);

component('status-line', `
  :host { display: flex; flex: none; align-items: center; height: 30px; background: #444; border-bottom: 2px solid #393939; --s: 18px; }
  m-grip { margin-right: 6px; }
  m-sep { margin: 0 6px; --s: 20px; }
  .tri { --s: 10px; }
  .box { width: 97px; height: 21px; --bg: #444; --bd: 1px solid #4f4f4f; }
  .end { margin-left: auto; margin-right: 3px; --h: 22px; }`,
  `<m-grip></m-grip>
   <m-combo name="Menu set" value="Modeling" style="width:96px"></m-combo><m-sep></m-sep>
   <m-tools icons="new open save undo redo" style="width:112px"></m-tools><m-sep></m-sep>
   <m-icon class="tri" name="tri"></m-icon>
   <m-field class="box" name="Selection mask" value="Components" style="width:90px"></m-field><m-sep></m-sep>
   <m-tools icons="selHier selObj *selComp" style="width:67px"></m-tools><m-sep></m-sep>
   <m-icon class="tri" name="tri" style="margin-right:3px"></m-icon>
   <m-tools icons="square point line quad nurbs target plus query lock selBox" style="width:225px;--s:17px"></m-tools><m-sep></m-sep>
   <m-tools icons="magGrid magCurve magPoint magProj magPlane mag" style="width:134px;--s:20px"></m-tools>
   <m-icon class="tri" name="tri" style="margin:0 6px 0 4px"></m-icon>
   <m-field class="box" name="Live surface" value="No Live Surface"></m-field><m-sep></m-sep>
   <m-icon class="tri" name="tri" style="margin:0 5px 0 4px"></m-icon>
   <m-field class="box" name="Symmetry" value="Symmetry: Off"></m-field><m-sep></m-sep>
   <m-tools icons="inNode outNode *history" style="width:67px"></m-tools><m-sep></m-sep>
   <m-tools icons="clapEye clap clapIPR clapCog ring clapLayers paintCog pause" style="width:180px"></m-tools><m-sep></m-sep>
   <m-tools icons="inputLine" style="width:32px;margin-left:4px"></m-tools>
   <m-field name="Quick input" style="width:161px"></m-field><m-sep></m-sep>
   <m-combo name="User" value="Dallin Burns" icon="user" style="width:118px;--line:transparent"></m-combo>
   <m-tools class="end" icons="hammerCube human attrs toolSet *layers" style="width:114px"></m-tools>`);

component('maya-shelf', `
  :host { display: flex; flex: none; height: 68px; background: #444; padding: 3px 4px 3px 0; border-bottom: 2px solid #393939; }
  .side { width: 20px; margin: 0 2px 0 6px; background: #373737; display: flex; flex-direction: column; align-items: center; justify-content: space-between; padding: 8px 0; --s: 11px; }
  .main { flex: 1; min-width: 0; display: flex; flex-direction: column; }
  .tabs { display: flex; gap: 2px; height: 18px; padding: 2px 0 0 2px; background: #373737; }
  .tabs button { padding: 0 9px 1px 10px; color: #8f8f8f; border: 1px solid #303030; border-bottom: 0; border-radius: 2px 2px 0 0; white-space: nowrap; background: #3a3a3a; }
  .tabs .hi { color: #c4c4c4; }
  .tabs .on { color: #eee; background: #444; border-color: #444; }
  .body { flex: 1; display: flex; align-items: center; justify-content: space-between; padding: 0 3px 2px 4px; }
  .items { display: grid; grid-template-columns: repeat(22, 1fr); width: 754px; --s: 24px; }
  .items button { position: relative; display: grid; place-items: center; height: 36px; }
  .items .big { --s: 31px; }
  .items .lab { place-items: start center; --s: 23px; }
  .items span { position: absolute; left: 1px; right: 1px; bottom: 2px; height: 14px; font-size: 10px; line-height: 14px; text-align: center; color: #e6e6e6; }
  .items .big span { bottom: 4px; }
  .items .lab span { background: #222; border-radius: 2px; }
  .items .tight span { font-size: 9px; }
  .scroll { height: 34px; }`,
  () => {
    const tabs = ['Curves / Surfaces', 'Poly Modeling', 'Rigging', 'Animation', 'Rendering', 'FX', 'FX Caching', 'Custom', 'Arnold', 'Bifrost', 'MASH', 'Motion Graphics', 'XGen', 'Sculpting', 'Dallin_Burns'];
    const items = ['minus||big', 'plusG||big', 'hist|Hist|lab', 'axes|FT|lab', 'knife', 'axes|CPivot|lab', 'extrude', 'edgeLoop', 'edgeLoops', 'diamonds', 'bridge', 'wheel', 'chain', 'stack', 'subdiv', 'mirror', 'circlePt', 'sphere', 'lattice', 'burst|CR|big', 'thirty|LFAC|big', 'switchM|SwitchC|lab tight'];
    return `<m-grip></m-grip><div class="side"><m-icon name="bars"></m-icon><m-icon name="gearS"></m-icon></div>
      <div class="main"><div class="tabs">${tabs.map((t, i) => `<button type="button" class="${i === 0 ? 'hi' : i === 14 ? 'on' : ''}">${t}</button>`).join('')}</div>
      <div class="body"><div class="items">${items.map(s => { const [n, l, c] = s.split('|'); return `<button type="button" aria-label="${l || n}" class="${c || ''}"><m-icon name="${n}"></m-icon>${l ? `<span>${l}</span>` : ''}</button>`; }).join('')}</div>
      <m-vscroll class="scroll"></m-vscroll></div></div>`;
  });

/* ---------- left side ---------- */
component('tool-box', `
  :host { display: flex; flex: none; flex-direction: column; width: 43px; padding: 3px 0 6px 2px; background: #444; border-right: 2px solid #393939; }
  .dots { flex: none; height: 6px; width: 36px; background: radial-gradient(circle, #777 0 .8px, transparent 1px) 0 0 / 3px 3px; margin-bottom: 3px; }
  button { display: grid; flex: none; place-items: center; width: 35px; height: 36px; --s: 27px; }
  button.on { background: #5285a6; height: 35px; --s: 28px; }
  .gap { height: 37px; }
  hr { width: 35px; height: 2px; margin: 5px 0; border: 0; background: #999; flex: none; }
  .find { --s: 35px; }
  .logo { margin: auto 0 0 2px; --s: 31px; }`,
  () => {
    const b = (n, c = '') => `<button type="button" aria-label="${n}" class="${c}"><m-icon name="${n}"></m-icon></button>`;
    return `<div class="dots"></div>${['arrow', 'lasso', 'paintSel', 'move', 'rotate', 'scale'].map(n => b(n)).join('')}<div class="gap"></div>${b('knife', 'on')}<hr>${b('single')}${b('four')}${b('two')}${b('outl', 'on')}<hr>${b('searchG', 'find')}<m-icon class="logo" name="maya"></m-icon>`;
  });

component('m-outliner', `
  :host { display: flex; flex: none; flex-direction: column; width: 390px; margin-right: 4px; background: #444; border-right: 1px solid #393939; }
  .tabs { height: 18px; padding: 2px 0 0 2px; background: #373737; }
  .tabs button { height: 16px; padding: 0 10px; background: #444; border-radius: 2px 2px 0 0; display: block; color: #d0d0d0; }
  m-menu { height: 22px; padding-left: 11px; color: #d4d4d4; }
  .search { display: flex; align-items: center; gap: 7px; padding: 4px 5px 2px 9px; --s: 14px; }
  .inp { position: relative; flex: 1; --s: 10px; }
  .inp m-icon { position: absolute; right: 4px; top: 4px; }
  .body { flex: 1; display: flex; margin: 0 4px 0 4px; background: #373737; min-height: 0; }
  ul { flex: none; list-style: none; margin: 0; padding: 0 0 0 35px; display: grid; grid-template-rows: repeat(6, 1fr); height: 117px; }
  li { display: flex; align-items: center; gap: 3px; --s: 16px; color: #d0d0d0; }
  li.dim { color: #6a6a6a; }
  .left { flex: 1; display: flex; flex-direction: column; justify-content: space-between; }
  m-dots { margin: 2px auto 7px; }`,
  `<div class="tabs"><button type="button">Outliner</button></div>
   <m-menu items="Display|Show|Help"></m-menu>
   <div class="search"><m-icon name="filter"></m-icon><div class="inp"><m-field name="Search outliner" placeholder="Search..."></m-field><m-icon name="triBig"></m-icon></div></div>
   <div class="body"><div class="left"><ul>
     <li class="dim"><m-icon name="cam"></m-icon>persp</li><li class="dim"><m-icon name="cam"></m-icon>top</li>
     <li class="dim"><m-icon name="cam"></m-icon>front</li><li class="dim"><m-icon name="cam"></m-icon>side</li>
     <li><m-icon name="setIcon"></m-icon>defaultLightSet</li><li><m-icon name="setIcon"></m-icon>defaultObjectSet</li></ul>
     <m-hscroll></m-hscroll></div><m-vscroll style="margin-bottom:12px"></m-vscroll></div><m-dots></m-dots>`);

/* ---------- viewport ---------- */
function gridLines() {
  const near = [892, 988], right = [1549, 526], left = [235, 526], k = 1.51, n = 24, out = [];
  const pt = (i, j) => {
    const w = 1 + (k - 1) * (i + j);
    const f = a => (near[a] + i * (k * right[a] - near[a]) + j * (k * left[a] - near[a])) / w;
    return `${f(0).toFixed(1)} ${f(1).toFixed(1)}`;
  };
  for (let a = 0; a <= n; a++) out.push(`M${pt(a / n, 0)}L${pt(a / n, 1)}M${pt(0, a / n)}L${pt(1, a / n)}`);
  return out.join('');
}

component('maya-viewport', `
  :host { flex: 1; min-width: 0; display: flex; flex-direction: column; margin: 3px 4px 3px 0; border: 1px solid #7d7d7d; background: #444; position: relative; }
  m-menu { height: 19px; padding-left: 8px; color: #d0d0d0; --gap: 15px; }
  .bar { display: flex; flex: none; align-items: center; height: 18px; --h: 17px; --s: 15px; border-bottom: 1px solid #393939; }
  m-sep { margin: 0 1px; width: 6px; --s: 16px; }
  m-sep:first-child { margin-left: 0; }
  m-field { height: 15px; width: 37px; }
  m-combo { width: 194px; margin-left: 3px; --h: 16px; }
  .canvas { flex: 1; position: relative; overflow: hidden; background: linear-gradient(#899cb4 0%, #8196ae 12%, #6e8398 30%, #6a7b94 36%, #56677e 52%, #445464 66%, #303b4a 78%, #1d232b 89%, #0d0d0e 100%); }
  svg { position: absolute; left: 0; top: 0; }
  .hud, .cam, .frame { position: absolute; font: 700 10px/14px "Liberation Sans", sans-serif; color: #fff; }
  .hud { left: 14px; top: -1px; height: 98px; display: grid; grid-template-columns: 50px 63px 63px 64px; grid-template-rows: repeat(5, 1fr); align-items: center; }
  .hud b:not(:nth-child(4n+1)) { text-align: right; }
  .cam, .frame { bottom: 4px; }
  .cam { left: 0; right: 16px; text-align: center; }
  .frame { right: 82px; display: flex; justify-content: space-between; width: 119px; }
  hotkey-editor { position: absolute; left: 148px; top: 137px; }`,
  () => `<m-menu items="View|Shading|Lighting|Show|Renderer|Panels"></m-menu>
   <div class="bar"><m-sep></m-sep><m-tools icons="cam camLock camCog bookmark plane panZoom brush" style="width:131px;margin-left:3px"></m-tools><m-sep></m-sep>
   <m-tools icons="*gridBox film gate gateDim chart safe safeT" style="width:130px;margin-left:2px"></m-tools><m-sep></m-sep>
   <m-tools icons="wire *shaded halfTex texCube checker bulb shadow" style="width:130px;margin-left:3px"></m-tools><m-sep></m-sep>
   <m-tools icons="occl blur aa dof" style="width:75px;margin-left:2px"></m-tools><m-sep></m-sep>
   <m-tools icons="isoSel" style="width:23px"></m-tools><m-sep></m-sep>
   <m-tools icons="xray xrayJ xrayA" style="width:57px"></m-tools><m-sep></m-sep>
   <m-tools icons="aperture" style="width:23px"></m-tools><m-field name="Exposure" value="0.00"></m-field>
   <m-tools icons="gamma" style="width:22px"></m-tools><m-field name="Gamma" value="1.00"></m-field>
   <m-tools icons="*on" style="width:17px;margin-left:3px"></m-tools><m-combo name="View transform" value="ACES 1.0 SDR-video (sRGB)"></m-combo></div>
   <div class="canvas">
     <svg width="1785" height="1051" aria-hidden="true"><path d="${gridLines()}" fill="none" stroke="#3c4145" stroke-width="1"/>
       <g stroke-width="1.500" fill="none"><path d="M25 1032v-16" stroke="#0c0"/><path d="M25 1032l8 4" stroke="#c00"/><path d="M25 1032l-8 4" stroke="#11c"/></g>
       <g font-family="Liberation Sans, sans-serif" font-weight="700" font-size="10"><text x="22" y="1012" fill="#0e0">y</text><text x="33" y="1037" fill="#e00">x</text><text x="12" y="1036" fill="#11d">z</text></g></svg>
     <div class="hud">${['Verts:', 'Edges:', 'Faces:', 'Tris:', 'UVs:'].map(t => `<b>${t}</b><b>0</b><b>0</b><b>0</b>`).join('')}</div>
     <div class="cam">persp</div><div class="frame"><span>Frame:</span><span>1</span></div>
   </div><hotkey-editor></hotkey-editor>`);

/* ---------- floating editor ---------- */
component('command-tree', `
  :host { flex: 1; min-height: 0; border: 1px solid #303030; padding: 1px; background: #444; }
  .in { height: 100%; background: #2b2b2b; border: 1px solid #303030; }
  table { width: 100%; border-collapse: collapse; table-layout: fixed; }
  th { height: 20px; padding: 0 0 0 3px; text-align: left; font-weight: 400; color: #eee; background: #5d5d5d; border-right: 2px solid #3a3a3a; border-bottom: 1px solid #303030; }
  th:last-child { border-right: 0; }
  td { height: 22px; padding: 0; color: #d4d4d4; white-space: nowrap; }
  tr.group td { background: #494949; color: #c4c4c4; }
  .group span { display: flex; align-items: center; gap: 2px; --s: 8px; }
  tr.sel td { background: #5285a6; color: #fff; height: 23px; }
  .cmd { padding-left: 20px; }
  .key { padding-left: 18px; }`,
  `<div class="in"><table><colgroup><col style="width:236px"><col style="width:141px"><col></colgroup>
   <thead><tr><th>Application Command</th><th>Runtime Command</th><th>Hotkey</th></tr></thead>
   <tbody><tr class="group"><td colspan="3"><span><m-icon name="triBig"></m-icon>Custom Scripts</span></td></tr>
   <tr class="sel"><td class="cmd">Switch Cam Hotkey</td><td>SwitchCamHotkey</td><td class="key">Alt+C</td></tr>
   <tr><td class="cmd">Multi Cut Tool Hotkey</td><td>MultiCutTool_Hotkey</td><td class="key">Shift+C</td></tr></tbody></table></div>`);

component('runtime-form', `
  :host { flex: 1; min-width: 0; display: flex; flex-direction: column; margin: 9px 10px 10px 0; border: 1px solid #373737; background: #444; }
  .tabs { display: flex; flex: none; height: 17px; padding: 2px 0 0 1px; background: #373737; }
  .tabs button { padding: 0 9px 0 8px; white-space: nowrap; color: #bdbdbd; border: 1px solid #303030; border-bottom: 0; background: #3a3a3a; }
  .tabs .on { background: #444; border-color: #444; padding: 0 10px 0 11px; }
  .btns { display: flex; gap: 19px; padding: 10px 0 7px 10px; }
  .b { width: 98px; height: 23px; background: #5d5d5d; color: #eee; }
  form { display: grid; grid-template-columns: 99px 290px 23px 90px 222px; grid-auto-rows: 18px; row-gap: 11px; align-items: center; padding: 0 0 0 11px; }
  form input[type=text] { height: 18px; width: 100%; padding: 0 5px; background: #404040; }
  .sub { grid-column: 5; }
  .cat { grid-column: 4; }
  m-combo { --h: 18px; --bg: #494949; --line: #444; width: 116px; }
  .radios { display: flex; color: #7d7d7d; padding-left: 1px; }
  .radios label { display: flex; align-items: center; gap: 6px; width: 100px; }
  input[type=radio] { appearance: none; width: 10px; height: 10px; border-radius: 50%; background: #2b2b2b; border: 1px solid #3a3a3a; }
  input[type=radio]:checked { background: #7a7a7a; border: 2px solid #333; }
  textarea { flex: 1; margin: 12px 5px 10px; padding: 5px; background: #2b2b2b; resize: none; font: 11px/14px "Liberation Mono", monospace; color: #cfcfcf; }
  .save { align-self: flex-end; flex: none; width: 147px; height: 23px; margin: 0 5px 19px 0; background: #494949; color: #7d7d7d; }`,
  `<div class="tabs"><button type="button">Keyboard</button><button type="button" class="on">Runtime Command Editor</button></div>
   <div class="btns"><button type="button" class="b">New</button><button type="button" class="b">Edit</button><button type="button" class="b">Delete</button></div>
   <form><label for="n">Name:</label><input id="n" type="text" value="SwitchCamHotkey">
   <span class="cat">Category:</span><m-combo name="Category" value="Custom Scripts" disabled></m-combo>
   <label for="d">Description:</label><input id="d" type="text" value="Switch_Cam_Hotkey">
   <label class="cat" for="c">Sub-Category:</label><input class="sub" id="c" type="text" placeholder="&lt;type an optional sub-category name&gt;">
   <span>Language:</span><div class="radios"><label><input type="radio" name="lang" checked>MEL</label><label><input type="radio" name="lang">Python</label></div></form>
   <textarea aria-label="Script" spellcheck="false">switchCam 1</textarea>
   <button type="button" class="save">Save Runtime Command</button>`);

component('hotkey-editor', `
  :host { display: flex; flex-direction: column; width: 1339px; height: 742px; background: #444; box-shadow: 0 0 0 1px #4a5058, 0 3px 14px rgba(0,0,0,.55); color: #c4c4c4; }
  header { display: flex; align-items: center; height: 29px; flex: none; background: #fff; color: #000; padding-left: 8px; gap: 7px; --s: 14px; }
  header b { flex: 1; font-weight: 400; }
  header m-tools { width: 134px; --h: 28px; --s: 19px; }
  .cols { flex: 1; display: flex; min-height: 0; }
  .left { flex: none; width: 559px; display: flex; flex-direction: column; padding: 11px 28px 10px 9px; }
  .set { display: flex; align-items: center; gap: 8px; padding-left: 2px; --s: 18px; }
  .set m-combo { width: 223px; }
  fieldset { flex: 1; min-height: 0; min-width: 0; margin: 22px 0 20px; padding: 12px 1px 12px; border: 1px solid #303030; display: flex; flex-direction: column; }
  .edit { width: 236px; margin: 0 0 11px 11px; --h: 18px; }
  .search { display: flex; align-items: center; gap: 3px; margin: 7px 12px 0 11px; }
  .search m-combo { width: 211px; --h: 18px; }
  .find { position: relative; flex: 1; --s: 13px; }
  .find input { width: 100%; height: 18px; display: block; background: #2b2b2b; padding: 0 18px; border-radius: 2px; }
  .find .l { position: absolute; left: 2px; top: 3px; } .find .r { position: absolute; right: 2px; top: 3px; }
  .info { display: flex; gap: 5px; padding-left: 14px; line-height: 13px; --s: 17px; }
  .foot { display: flex; align-items: center; justify-content: flex-end; margin-top: 24px; --s: 20px; }
  .foot button { width: 98px; height: 23px; background: #5d5d5d; color: #eee; margin-left: 20px; }
  .foot m-icon + button { margin-left: 21px; }`,
  `<header><m-icon name="maya"></m-icon><b>Hotkey Editor</b><m-tools icons="wMin wMax wClose"></m-tools></header>
   <div class="cols"><div class="left">
     <div class="set"><m-combo label="Hotkey Set:" value="Maya Default Duplicate"></m-combo><m-icon name="gear"></m-icon></div>
     <fieldset><m-combo class="edit" label="Edit Hotkeys For:" value="Custom Scripts"></m-combo>
       <command-tree></command-tree>
       <div class="search"><m-combo label="Search By:" value="Application Command"></m-combo>
         <div class="find"><input type="text" aria-label="Search commands" placeholder="Enter the Application Command..."><m-icon class="l" name="find"></m-icon><m-icon class="r" name="clear"></m-icon></div></div></fieldset>
     <div class="info"><m-icon name="info"></m-icon><div>To assign or edit a Hotkey:<br>1. Select the "Edit Hotkeys for" option and select the desired hotkey category.<br>2. Find the desired Application Command or Runtime command in the list (or use Search).<br>3. Click on the command and enter your hotkey shortcut.</div></div>
     <div class="foot"><m-icon name="helpO"></m-icon><button type="button">Save</button><button type="button">Save and Close</button></div>
   </div><runtime-form></runtime-form></div>`);

/* ---------- right side ---------- */
component('channel-box', `
  :host { display: flex; flex: none; flex-direction: column; width: 257px; background: #444; border-left: 1px solid #373737; padding: 0 2px 4px 3px; }
  .top { display: flex; justify-content: flex-end; height: 22px; align-items: center; padding-right: 1px; }
  .top m-tools { width: 63px; --s: 14px; }
  .ch { height: 22px; padding-left: 8px; color: #d0d0d0; }
  p { margin: 223px 0 0; text-align: center; line-height: 13px; color: #e0e0e0; }
  .mid { height: 541px; flex: none; display: flex; flex-direction: column; }
  .mid m-dots { margin: auto auto 8px; width: 84px; }
  .pane { flex: 1; display: flex; flex-direction: column; border: 1px solid #373737; }
  .tabs { display: flex; gap: 2px; height: 17px; padding: 1px 0 0 1px; background: #373737; }
  .tabs button { width: 46px; color: #858585; background: #3a3a3a; border: 1px solid #303030; border-bottom: 0; }
  .tabs .on { width: 57px; color: #eee; background: #444; border-color: #444; }
  .lay { height: 21px; padding-left: 9px; }
  .ic { display: flex; justify-content: flex-end; gap: 4px; height: 25px; padding-right: 4px; --s: 13px; }
  .ic m-tools { width: 46px; --h: 20px; align-items: start; }
  .list { flex: 1; margin: 0 3px; background: #2b2b2b; }
  m-hscroll { margin: 0 3px 3px; --thumb: 70%; }`,
  `<div class="mid"><div class="top"><m-tools icons="manip gauge graph"></m-tools></div>
   <m-menu class="ch" items="Channels|Edit|Object|Show"></m-menu>
   <p>Select objects in the scene to view,<br>edit and set keyframes on channels<br>(attributes)</p><m-dots></m-dots></div>
   <div class="pane"><div class="tabs"><button type="button" class="on">Display</button><button type="button">Anim</button></div>
   <m-menu class="lay" items="Layers|Options|Help"></m-menu>
   <div class="ic"><m-tools icons="layUp layDown"></m-tools><m-tools icons="layNew layObj"></m-tools></div>
   <div class="list"></div><m-hscroll></m-hscroll></div>`);

component('side-tabs', `
  :host { flex: none; width: 16px; background: #373737; display: flex; flex-direction: column; gap: 3px; padding-top: 2px; }
  button { writing-mode: vertical-rl; width: 16px; padding: 9px 0 6px; color: #7d7d7d; border: 1px solid #303030; border-left: 0; text-align: left; white-space: nowrap; line-height: 14px; background: #3a3a3a; }
  .on { color: #e0e0e0; background: #444; border-color: #444; }`,
  `<button type="button" class="on">Channel Box / Layer Editor</button><button type="button">Attribute Editor</button><button type="button">Modeling Toolkit</button>`);

/* ---------- bottom bars ---------- */
component('time-slider', `
  :host { display: flex; flex: none; height: 58px; padding: 5px 8px 5px 0; background: #444; border-top: 1px solid #393939; border-bottom: 1px solid #393939; }
  m-grip { margin: 0 5px 0 0; }
  .track { position: relative; flex: 1; height: 47px; display: grid; grid-template-columns: 29px repeat(59, minmax(0, 1fr)) 29px; background: #2b2b2b; border-bottom: 2px solid #373737; color: #7d7d7d; line-height: 13px; }
  .track span { display: flex; flex-direction: column; padding-left: 3px; }
  .track span::before { content: ""; order: 2; width: 2px; height: 31px; margin-left: -4px; background: #8a8a8a; }
  .cur { position: absolute; left: 11px; top: 0; bottom: -2px; width: 17px; background: #5a5a5a; color: #fff; padding: 29px 0 0 3px; }
  m-field { width: 87px; margin: 6px 8px 0 6px; --bd: 1px solid #393939; }
  m-tools { width: 180px; --s: 16px; align-self: flex-start; margin-top: 2px; }`,
  () => `<m-grip></m-grip><div class="track"><i></i>${Array.from({ length: 60 }, (_, i) => `<span>${i * 2 + 2}</span>`).join('')}<div class="cur">1</div></div>
   <m-field name="Current frame" value="1"></m-field><m-tools icons="toStart stepBack keyBack playBack play keyFwd stepFwd toEnd"></m-tools>`);

component('range-slider', `
  :host { display: flex; flex: none; align-items: center; height: 36px; padding-right: 5px; background: #444; border-bottom: 1px solid #393939; }
  m-grip { margin-right: 6px; }
  m-field { width: 86px; height: 25px; margin-right: 8px; --bd: 1px solid #393939; }
  .track { flex: 1; height: 25px; background: #373737; padding: 2px 0 3px 6px; margin-right: 7px; border: 1px solid #333; }
  .bar { display: flex; align-items: center; justify-content: space-between; width: 60.6%; height: 20px; background: #5d5d5d; border-radius: 3px; padding: 0 6px 0 4px; }
  .bar span { display: flex; align-items: center; gap: 4px; }
  .bar i { width: 15px; height: 14px; border-radius: 4px; background: #999; }
  m-sep.a { margin-left: -3px; }
  .tri { --s: 10px; margin: 0 6px 0 9px; }
  .box { width: 100px; margin: 0; --bg: #444; --bd: 1px solid #525252; }
  m-combo { width: 94px; margin: 0 8px 0 7px; --h: 19px; }
  .t { --s: 18px; }`,
  `<m-grip></m-grip><m-field name="Animation start" value="1"></m-field><m-field name="Playback start" value="1"></m-field>
   <div class="track"><div class="bar"><span><i></i>1</span><span>120<i></i></span></div></div>
   <m-field name="Playback end" value="120"></m-field><m-field name="Animation end" value="200" style="margin-right:4px"></m-field>
   <m-sep class="a"></m-sep><m-tools class="t" icons="bookAdd" style="width:36px"></m-tools><m-sep></m-sep>
   <m-icon class="tri" name="triO"></m-icon><m-field class="box" name="Character set" value="No Character Set"></m-field>
   <m-icon class="tri" name="triO"></m-icon><m-field class="box" name="Animation layer" value="No Anim Layer"></m-field>
   <m-sep style="margin-left:6px"></m-sep><m-combo name="Frame rate" value="24 fps"></m-combo>
   <m-tools class="t" icons="loop" style="width:30px"></m-tools><m-tools class="t" icons="*filmAct" style="width:22px;--h:22px"></m-tools>
   <m-sep style="margin-left:5px"></m-sep><m-tools class="t" icons="speaker" style="width:34px"></m-tools><m-tools class="t" icons="!autokey" style="width:22px;--h:22px"></m-tools><m-tools class="t" icons="runner" style="width:32px"></m-tools>`);

component('command-line', `
  :host { display: flex; flex: none; align-items: center; height: 33px; background: #444; padding-right: 9px; }
  m-grip { margin-right: 5px; }
  .help { --s: 18px; }
  .msg { flex: 635; border-right: 1px solid #393939; height: 26px; }
  button { margin: 0 13px 0 23px; }
  m-field { height: 24px; }
  m-field.in { flex: 709; margin-right: 7px; }
  m-field.out { flex: 1030; margin-right: 5px; }
  .ed { --s: 18px; }`,
  `<m-grip></m-grip><m-icon class="help" name="help"></m-icon><div class="msg"></div><button type="button">MEL</button>
   <m-field class="in" name="Command input"></m-field><m-field class="out" name="Command result"></m-field><m-icon class="ed" name="script"></m-icon>`);

component('maya-app', `
  :host { display: flex; flex-direction: column; height: 100vh; border-bottom: 2px solid #1c1c1c; }
  main { flex: 1; min-height: 0; display: flex; }`,
  `<menu-line></menu-line><status-line></status-line><maya-shelf></maya-shelf>
   <main><tool-box></tool-box><m-outliner></m-outliner><maya-viewport></maya-viewport><channel-box></channel-box><side-tabs></side-tabs></main>
   <time-slider></time-slider><range-slider></range-slider><command-line></command-line>`);
</script>
</body>
</html>
